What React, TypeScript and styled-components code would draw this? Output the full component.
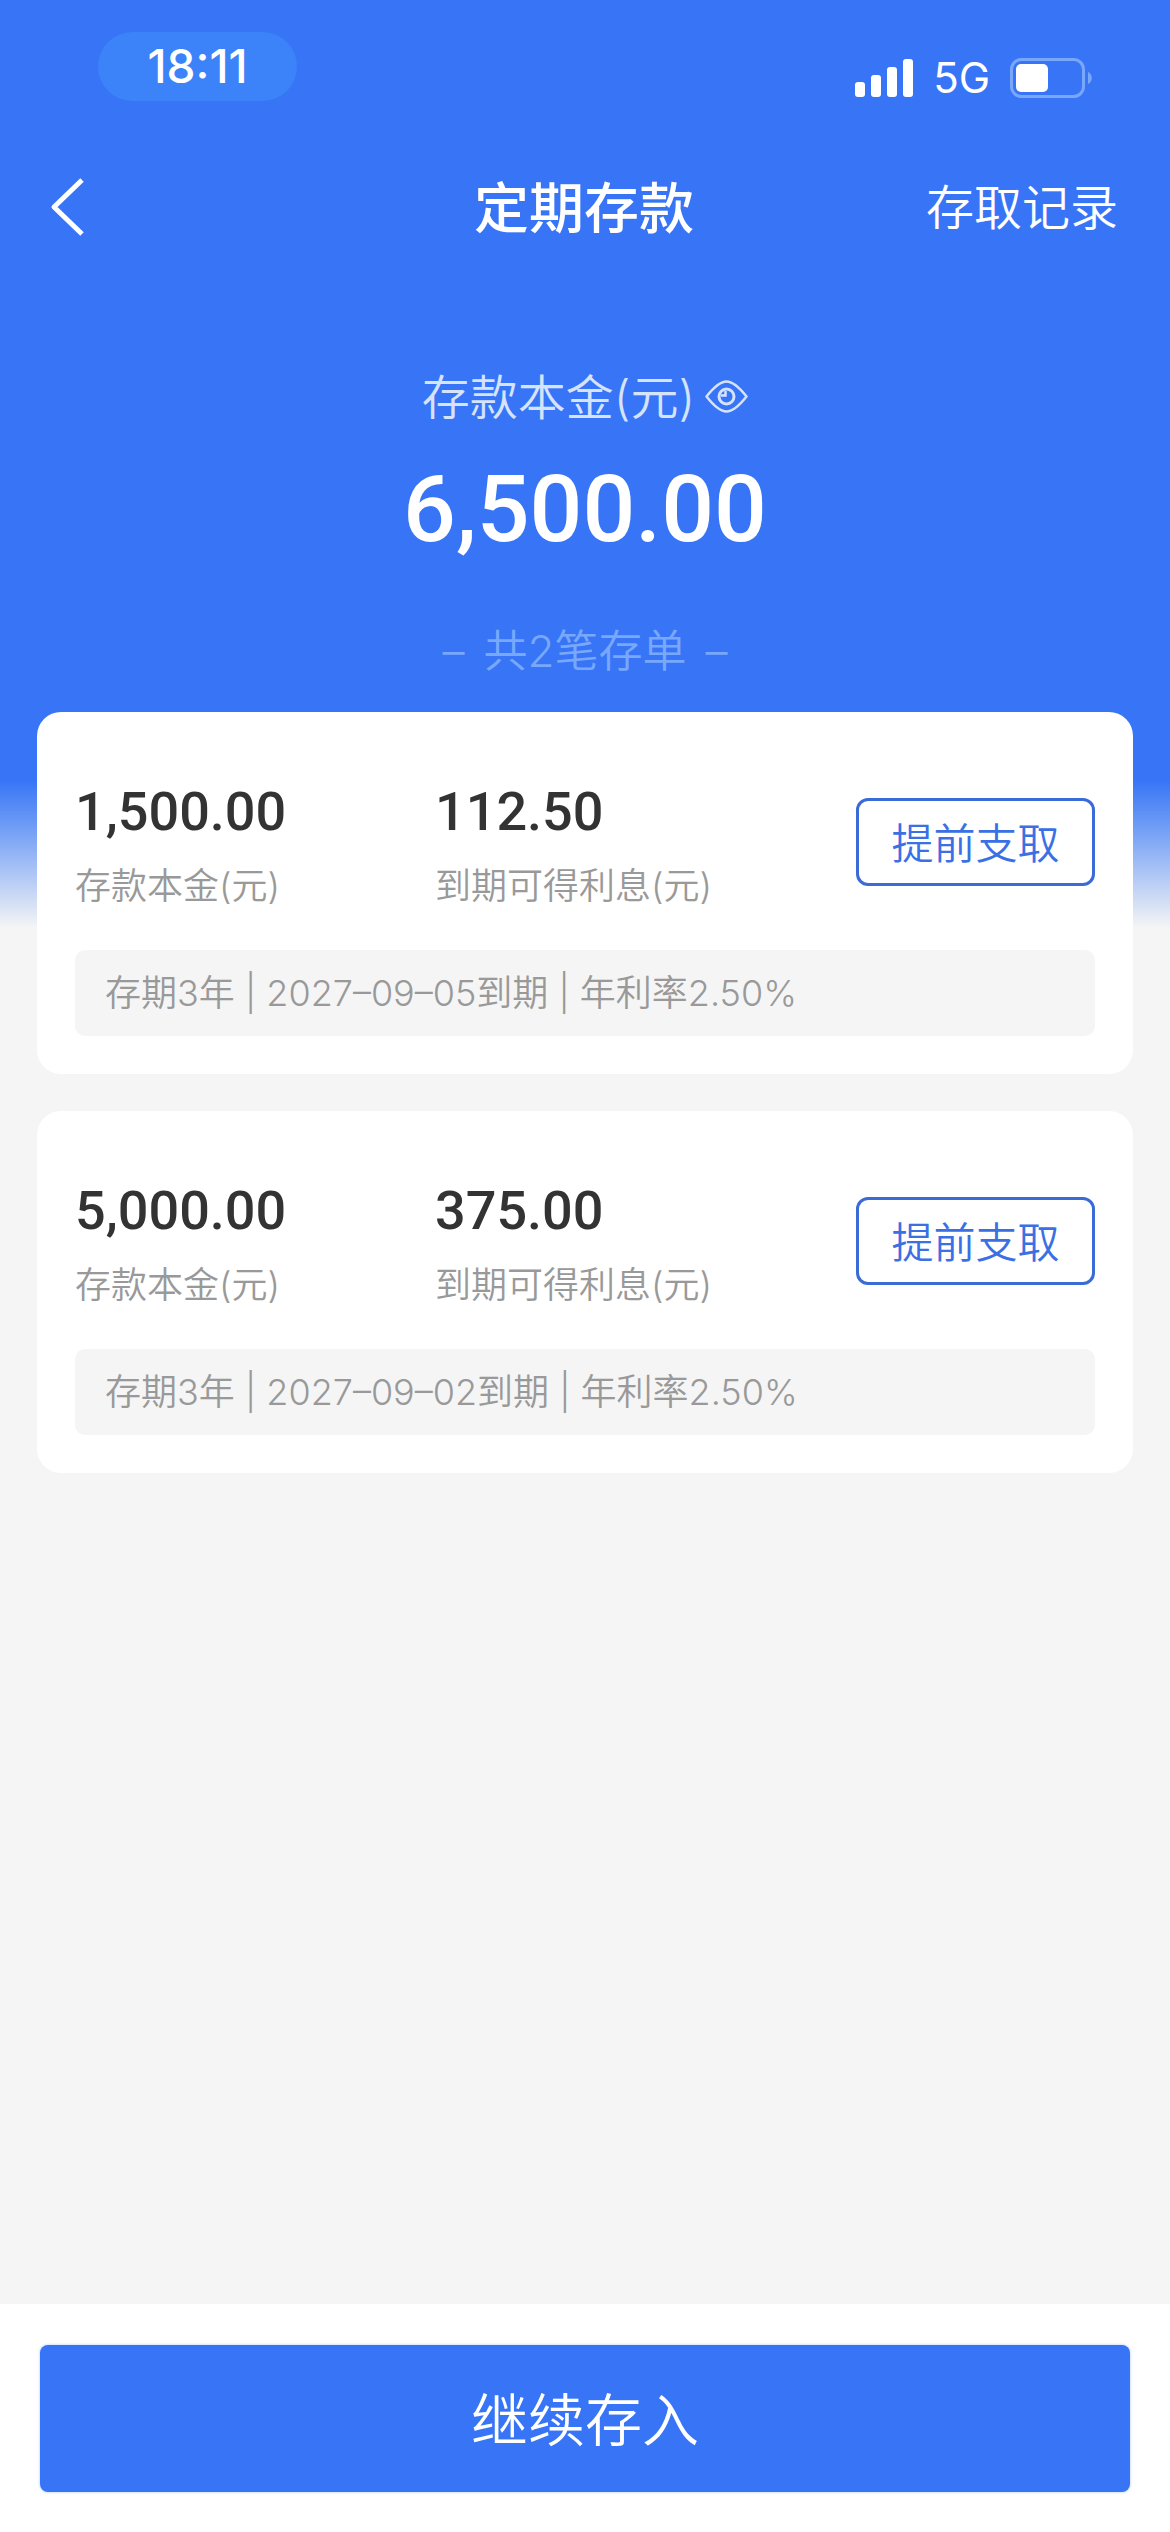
import React, { useState } from "react";
import styled, { createGlobalStyle } from "styled-components";

const cjk = `"Noto Sans CJK SC", sans-serif`;
const blue = "#3775f6";

const GlobalStyle = createGlobalStyle`
  * { box-sizing: border-box; }
  body { margin: 0; background: #f5f5f5; }
  button { font: inherit; border: 0; padding: 0; background: none; color: inherit; cursor: pointer; }
  h1, p, dl, dd, dt, ul { margin: 0; padding: 0; }
`;

const Page = styled.div`
  display: flex;
  flex-direction: column;
  min-height: 100vh;
  font-family: Inter, ${cjk};
  font-weight: 350;
  background: linear-gradient(${blue} 780px, #6c9af5 824px, #f5f5f5 928px) #f5f5f5;
`;

const StatusBar = styled.div`
  display: flex;
  justify-content: space-between;
  align-items: flex-start;
  height: 136px;
  padding: 32px 77px 0 98px;
  color: #fff;
`;

const TimePill = styled.time`
  width: 199px;
  border-radius: 35px;
  background: #3c82f8;
  font-size: 46px;
  font-weight: 500;
  line-height: 69px;
  text-align: center;
`;

const StatusIcons = styled.div`
  display: flex;
  align-items: center;
  gap: 20px;
  padding-top: 20px;
  font-size: 42px;
  font-weight: 400;
  line-height: 52px;
`;

const NavBar = styled.header`
  display: grid;
  grid-template-columns: 1fr auto 1fr;
  align-items: center;
  height: 144px;
  padding: 0 52px 0 50px;
  color: #fff;
`;

const BackButton = styled.button`
  display: flex;
  justify-self: start;
`;

const Title = styled.h1`
  font-size: 55px;
  font-weight: 500;
  line-height: 80px;
`;

const RecordsLink = styled.a`
  justify-self: end;
  color: inherit;
  font-size: 48px;
  line-height: 72px;
  text-decoration: none;
`;

const Summary = styled.section`
  display: flex;
  flex-direction: column;
  align-items: center;
  padding: 82px 0 28px;
`;

const SummaryLabel = styled.div`
  display: flex;
  align-items: center;
  gap: 10px;
  color: #d5e3fd;
  font-size: 48px;
  line-height: 72px;
`;

const EyeButton = styled.button`
  display: flex;
`;

const Total = styled.p`
  padding-top: 20px;
  color: #fff;
  font-family: Roboto, sans-serif;
  font-size: 93px;
  font-weight: 500;
  line-height: 112px;
`;

const Count = styled.p`
  display: flex;
  gap: 19px;
  padding-top: 52px;
  color: #78a8fb;
  font-size: 44px;
  line-height: 66px;
`;

const CardList = styled.ul`
  flex: 1;
  display: flex;
  flex-direction: column;
  gap: 37px;
  padding: 0 37px 37px;
  list-style: none;
`;

const Card = styled.li`
  padding: 68px 38px 38px;
  border-radius: 24px;
  background: #fff;
`;

const CardTop = styled.div`
  display: grid;
  grid-template-columns: 360px 1fr auto;
  align-items: start;
`;

const Figure = styled.dl`
  display: flex;
  flex-direction: column-reverse;
`;

const FigureLabel = styled.dt`
  padding-top: 15px;
  color: #999;
  font-size: 36px;
  line-height: 54px;
`;

const FigureValue = styled.dd`
  color: #333;
  font-family: Roboto, sans-serif;
  font-size: 54px;
  font-weight: 500;
  line-height: 64px;
`;

const WithdrawButton = styled.button`
  width: 239px;
  height: 88px;
  margin-top: 18px;
  padding-top: 4px;
  border: 3px solid #3b6bd6;
  border-radius: 12px;
  color: #3a70e4;
  font-size: 42px;
  line-height: 62px;
`;

const Terms = styled.p`
  margin-top: 37px;
  padding: 16px 30px;
  border-radius: 10px;
  background: #f5f5f5;
  color: #999;
  font-size: 36px;
  line-height: 54px;
`;

const Footer = styled.footer`
  display: flex;
  padding: 41px 40px 40px;
  background: #fff;
`;

const DepositButton = styled.button`
  flex: 1;
  height: 147px;
  padding-top: 4px;
  border-radius: 8px;
  background: ${blue};
  box-shadow: 0 0 3px #a9c5fa;
  color: #fff;
  font-size: 57px;
  line-height: 84px;
`;

const Signal = () => (
  <svg width="58" height="38" viewBox="0 0 58 38" fill="#fff" aria-hidden="true">
    <rect x="0" y="23" width="10" height="15" rx="3" />
    <rect x="16" y="16" width="10" height="22" rx="3" />
    <rect x="32" y="8" width="10" height="30" rx="3" />
    <rect x="48" y="0" width="10" height="38" rx="3" />
  </svg>
);

const Battery = () => (
  <svg width="83" height="40" viewBox="0 0 83 40" aria-hidden="true">
    <rect x="1.5" y="1.5" width="72" height="37" rx="10" fill="none" stroke="#78a7fb" strokeWidth="3" />
    <rect x="6" y="6" width="32" height="28" rx="5" fill="#fff" />
    <path d="M78 14 C83 16 83 24 78 26 Z" fill="#78a7fb" />
  </svg>
);

const Chevron = () => (
  <svg width="36" height="60" viewBox="0 0 36 60" fill="none" stroke="#fff" strokeWidth="5" aria-hidden="true">
    <path d="M32 2 L4 29 L32 56" strokeLinejoin="round" />
  </svg>
);

const Eye = ({ open }: { open: boolean }) => (
  <svg width="43" height="36" viewBox="0 0 43 36" fill="none" stroke="#d5e3fd" strokeWidth="2.5" aria-hidden="true">
    <path
      d="M1.5 16.5 C9 7 15 1.5 21.5 1.5 C28 1.5 34 7 41.5 16.5 C34 26 28 31.5 21.5 31.5 C15 31.5 9 26 1.5 16.5 Z"
      strokeLinejoin="round"
    />
    {open ? (
      <>
        <circle cx="21.5" cy="16.5" r="7.5" strokeWidth="3" />
        <path d="M20.5 11 V15.5 H16" strokeWidth="2.5" />
      </>
    ) : (
      <path d="M6 31 L37 3" />
    )}
  </svg>
);

type Deposit = { principal: string; interest: string; years: number; due: string; rate: string };

const deposits: Deposit[] = [
  { principal: "1,500.00", interest: "112.50", years: 3, due: "2027–09–05", rate: "2.50%" },
  { principal: "5,000.00", interest: "375.00", years: 3, due: "2027–09–02", rate: "2.50%" },
];

const DepositCard = ({ deposit }: { deposit: Deposit }) => (
  <Card>
    <CardTop>
      <Figure>
        <FigureLabel>存款本金(元)</FigureLabel>
        <FigureValue>{deposit.principal}</FigureValue>
      </Figure>
      <Figure>
        <FigureLabel>到期可得利息(元)</FigureLabel>
        <FigureValue>{deposit.interest}</FigureValue>
      </Figure>
      <WithdrawButton type="button">提前支取</WithdrawButton>
    </CardTop>
    <Terms>{`存期${deposit.years}年 | ${deposit.due}到期 | 年利率${deposit.rate}`}</Terms>
  </Card>
);

export default function App() {
  const [visible, setVisible] = useState(true);
  return (
    <Page lang="zh-CN">
      <GlobalStyle />
      <StatusBar>
        <TimePill>18:11</TimePill>
        <StatusIcons>
          <Signal />
          <span>5G</span>
          <Battery />
        </StatusIcons>
      </StatusBar>
      <NavBar>
        <BackButton type="button" aria-label="返回">
          <Chevron />
        </BackButton>
        <Title>定期存款</Title>
        <RecordsLink href="#records">存取记录</RecordsLink>
      </NavBar>
      <Summary>
        <SummaryLabel>
          <span>存款本金(元)</span>
          <EyeButton type="button" aria-label="显示或隐藏金额" onClick={() => setVisible(!visible)}>
            <Eye open={visible} />
          </EyeButton>
        </SummaryLabel>
        <Total>{visible ? "6,500.00" : "****"}</Total>
        <Count>
          <span>–</span>
          <span>共{deposits.length}笔存单</span>
          <span>–</span>
        </Count>
      </Summary>
      <CardList>
        {deposits.map((deposit) => (
          <DepositCard key={deposit.due} deposit={deposit} />
        ))}
      </CardList>
      <Footer>
        <DepositButton type="button">继续存入</DepositButton>
      </Footer>
    </Page>
  );
}
